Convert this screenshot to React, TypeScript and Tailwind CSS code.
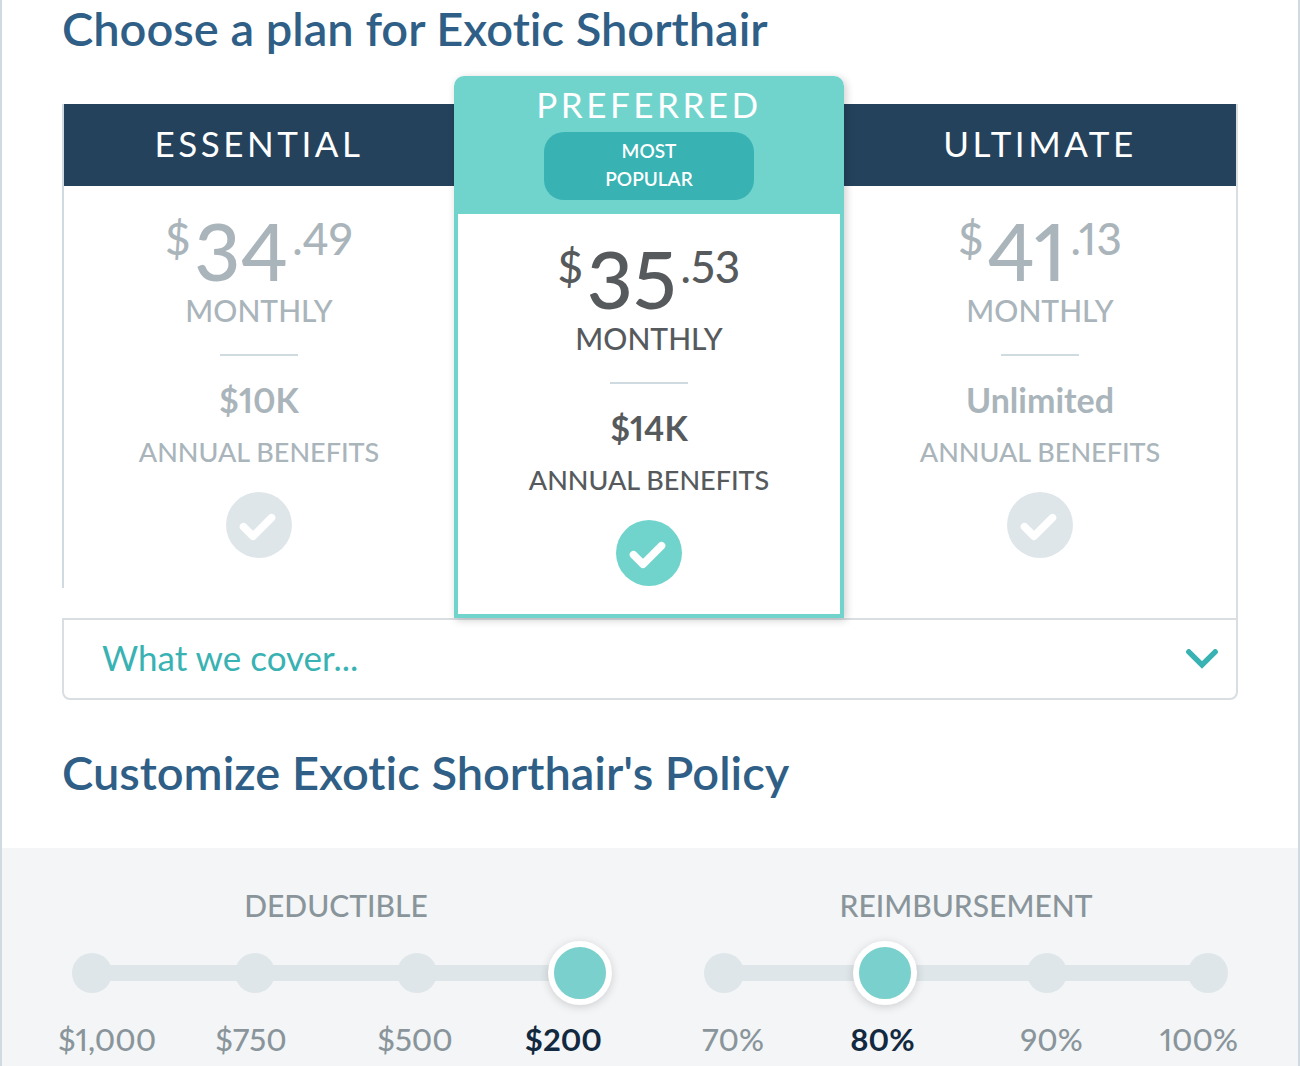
import { useState } from 'react'
import clsx from 'clsx'

const plans = [
  { id: 'essential', name: 'Essential', dollars: '34', cents: '.49', limit: '$10K' },
  { id: 'preferred', name: 'Preferred', dollars: '35', cents: '.53', limit: '$14K', popular: true },
  { id: 'ultimate', name: 'Ultimate', dollars: '41', cents: '.13', limit: 'Unlimited' },
]

function CheckIcon({ active }: { active: boolean }) {
  return (
    <svg viewBox="0 0 66 66" className="mt-5 h-[66px] w-[66px]" aria-hidden="true">
      <circle cx="33" cy="33" r="33" className={active ? 'fill-[#70d4cd]' : 'fill-[#dfe6e9]'} />
      <path d="M17.5 34.8 27 44.3 45.5 25.8" fill="none" stroke="#fff" strokeWidth="7.6" strokeLinecap="round" strokeLinejoin="round" />
    </svg>
  )
}

function PlanCard({ plan, active, onSelect }: { plan: (typeof plans)[number]; active: boolean; onSelect: () => void }) {
  return (
    <label
      className={clsx(
        'flex cursor-pointer flex-col text-center',
        plan.popular && 'relative z-10 -mt-7 rounded-t-[10px] bg-white shadow-[2px_2px_8px_rgba(0,0,0,0.2)]',
        plan.id === 'essential' && 'border-l-2 border-[#cfdae1]',
        plan.id === 'ultimate' && 'h-full border-r-2 border-[#d8dee2]',
      )}
    >
      <input type="radio" name="plan" className="sr-only" checked={active} onChange={onSelect} />
      {plan.popular ? (
        <span className="flex flex-col items-center rounded-t-[10px] bg-[#70d4cd] pb-3.5 text-white">
          <span className="text-[35px] leading-14 tracking-widest uppercase">{plan.name}</span>
          <span className="w-[210px] rounded-[20px] bg-[#38b2b3] px-12 pt-[5px] pb-[7px] text-[19px] leading-7 font-semibold uppercase">Most Popular</span>
        </span>
      ) : (
        <span className="bg-[#24425c] pb-1 text-[35px] leading-[78px] tracking-widest text-white uppercase">{plan.name}</span>
      )}
      <span
        className={clsx(
          'flex flex-col items-center pt-6',
          active ? 'text-[#565a5d]' : 'text-[#aab5bb]',
          plan.popular ? 'border-x-4 border-b-4 border-[#70d4cd] pb-7' : 'pb-[30px]',
        )}
      >
        <span className="flex items-start gap-1 font-medium">
          <span className="text-[44px] leading-14">$</span>
          <span className="text-[80px] leading-20">{plan.dollars}</span>
          <span className="text-[44px] leading-14">{plan.cents}</span>
        </span>
        <span className="text-[30px] leading-10 font-medium uppercase">Monthly</span>
        <span className="my-6 h-0.5 w-[78px] bg-[#cfdae1]" />
        <span className="text-[34px] leading-10 font-bold">{plan.limit}</span>
        <span className="mt-3 text-[27px] leading-10 font-medium uppercase">Annual Benefits</span>
        <CheckIcon active={active} />
      </span>
    </label>
  )
}

type StepPickerProps = {
  name: string
  options: string[]
  initial: number
  trackClass: string
  labelsClass: string
}

function StepPicker({ name, options, initial, trackClass, labelsClass }: StepPickerProps) {
  const [selected, setSelected] = useState(initial)
  const id = name.toLowerCase()

  return (
    <div role="radiogroup" aria-labelledby={id} className="font-medium text-[#8a959b]">
      <div className={trackClass}>
        <h3 id={id} className="text-center text-[30px] leading-10 uppercase">{name}</h3>
        <div className="relative mt-4 flex h-16 items-center justify-between">
          <div className="absolute inset-x-5 top-1/2 h-4 -translate-y-1/2 bg-[#dfe6e9]" />
          {options.map((option, i) => (
            <input
              key={option}
              id={`${id}-${i}`}
              type="radio"
              name={id}
              checked={i === selected}
              onChange={() => setSelected(i)}
              className={clsx(
                'relative shrink-0 cursor-pointer appearance-none rounded-full',
                i === selected
                  ? '-mx-3 h-16 w-16 border-6 border-white bg-[#7ad0cc] shadow-[0_2px_10px_rgba(0,0,0,0.16)]'
                  : 'h-10 w-10 bg-[#dfe6e9]',
              )}
            />
          ))}
        </div>
      </div>
      <div className={clsx('mt-3.5 grid text-[31px] leading-10', labelsClass)}>
        {options.map((option, i) => (
          <label
            key={option}
            htmlFor={`${id}-${i}`}
            className={clsx(
              'cursor-pointer text-center first:text-left last:text-right',
              i === selected && 'font-bold text-[#12293f]',
            )}
          >
            {option}
          </label>
        ))}
      </div>
    </div>
  )
}

export default function App() {
  const [plan, setPlan] = useState('preferred')
  const [open, setOpen] = useState(false)

  return (
    <div className="flex min-h-screen flex-col border-x-2 border-[#cfdae1] bg-white font-['Lato',sans-serif] proportional-nums [font-variant-ligatures:none]">
      <main className="px-15">
        <h1 className="text-[47px] leading-14 font-semibold text-[#2f5f86]">Choose a plan for Exotic Shorthair</h1>

        <div className="mt-12 grid grid-cols-[392fr_390fr_394fr]">
          {plans.map((p) => (
            <div key={p.id}>
              <PlanCard plan={p} active={p.id === plan} onSelect={() => setPlan(p.id)} />
            </div>
          ))}
        </div>

        <button
          type="button"
          aria-expanded={open}
          onClick={() => setOpen(!open)}
          className="flex h-[82px] w-full cursor-pointer items-center justify-between rounded-b-lg border-2 border-[#d8dee2] pr-[18px] pb-1 pl-[38px] text-[35px] text-[#38b2b3]"
        >
          What we cover...
          <svg viewBox="0 0 32 20" className="mt-1 h-5 w-8" fill="none" stroke="currentColor" strokeWidth="5.4" aria-hidden="true">
            <path d="M2.8 2.8 16 16 29.2 2.8" strokeLinecap="round" />
          </svg>
        </button>

        <h2 className="pb-1 text-[47px] leading-36 font-semibold text-[#2f5f86]">Customize Exotic Shorthair's Policy</h2>
      </main>

      <section className="grid flex-1 grid-cols-[544fr_536fr] gap-25 bg-[#f3f5f7] pt-[37px] pr-15 pl-14">
        <StepPicker
          name="Deductible"
          options={['$1,000', '$750', '$500', '$200']}
          initial={3}
          trackClass="pr-0.5 pl-3.5"
          labelsClass="grid-cols-[111fr_164fr_164fr_105fr]"
        />
        <StepPicker
          name="Reimbursement"
          options={['70%', '80%', '90%', '100%']}
          initial={1}
          trackClass="pr-2.5 pl-0.5"
          labelsClass="grid-cols-[96fr_169fr_169fr_102fr]"
        />
      </section>
    </div>
  )
}
